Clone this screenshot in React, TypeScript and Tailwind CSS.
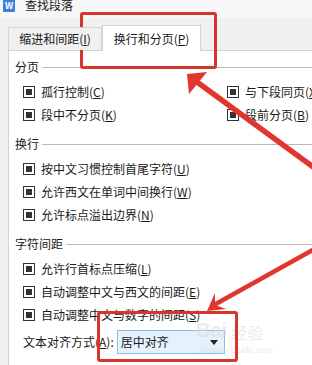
import React from 'react';

const font = { fontFamily: '"Noto Sans CJK SC", "Noto Sans", sans-serif' };

function Check() {
  return (
    <span className="flex items-center justify-center w-[12px] h-[12px] border border-[#333333] bg-white shrink-0">
      <span className="w-[6px] h-[6px] bg-[#333333]" />
    </span>
  );
}

function Item({ label, k }: { label: string; k: string }) {
  return (
    <div className="flex items-center gap-[6px] h-[23px] whitespace-nowrap">
      <Check />
      <span>
        {label}(<u>{k}</u>)
      </span>
    </div>
  );
}

function Section({ title, first }: { title: string; first?: boolean }) {
  return (
    <div className={`flex items-center gap-[3px] h-[16px] ${first ? '' : 'mt-[10px]'}`}>
      <span className="leading-[16px]">{title}</span>
      <span className="flex-1 h-px bg-[#b9b9b9]" />
    </div>
  );
}

export default function App() {
  return (
    <div
      className="relative w-[312px] h-[365px] overflow-hidden bg-[#f0f0f0] text-[12px] text-[#1a1a1a]"
      style={font}
    >
      {/* Title bar */}
      <div className="h-[18px] bg-[#f7f7f7] flex items-start gap-[10px] pl-[3px]">
        <span className="flex items-center justify-center w-[12px] h-[13px] -mt-[1px] bg-[#3d7fe0] text-white text-[9px] leading-none font-bold rounded-[1px]">
          W
        </span>
        <span className="text-[12px] leading-[13px] -mt-[2px] text-[#222]">查找段落</span>
      </div>

      {/* Tabs */}
      <div className="h-[32px] flex items-end pl-[8px] relative z-10">
        <div className="w-[94px] h-[23px] border border-b-0 border-[#d4d4d4] bg-[#f0f0f0] flex items-center justify-center">
          缩进和间距(<u>I</u>)
        </div>
        <div className="w-[99px] h-[26px] -mb-px border border-b-0 border-[#d4d4d4] bg-white flex items-center justify-center">
          换行和分页(<u>P</u>)
        </div>
      </div>

      {/* Panel */}
      <div className="ml-[8px] h-full bg-white border-l border-t border-[#d4d4d4] pt-[8px] pl-[6px]">
        <Section title="分页" first />
        <div className="mt-[5px] pl-[8px] grid grid-cols-[204px_1fr]">
          <Item label="孤行控制" k="C" />
          <Item label="与下段同页" k="X" />
          <Item label="段中不分页" k="K" />
          <Item label="段前分页" k="B" />
        </div>

        <Section title="换行" />
        <div className="mt-[5px] pl-[8px]">
          <Item label="按中文习惯控制首尾字符" k="U" />
          <Item label="允许西文在单词中间换行" k="W" />
          <Item label="允许标点溢出边界" k="N" />
        </div>

        <Section title="字符间距" />
        <div className="mt-[5px] pl-[8px]">
          <Item label="允许行首标点压缩" k="L" />
          <Item label="自动调整中文与西文的间距" k="E" />
          <Item label="自动调整中文与数字的间距" k="S" />
        </div>

        <div className="mt-[4px] pl-[8px] flex items-center gap-[3px] h-[24px]">
          <span className="whitespace-nowrap">
            文本对齐方式(<u>A</u>):
          </span>
          <div className="w-[108px] h-[24px] border border-[#8dbbe8] bg-[#e5f1fb] flex items-center justify-between pl-[3px] pr-[6px]">
            <span>居中对齐</span>
            <svg width="8" height="5" viewBox="0 0 8 5">
              <path d="M0 0 L8 0 L4 5 Z" fill="#222" />
            </svg>
          </div>
        </div>
      </div>

      {/* Watermark */}
      <div className="absolute left-[196px] top-[320px] text-[#d8d8d8] opacity-50 pointer-events-none leading-none">
        <div className="flex items-end gap-[4px]">
          <span className="text-[20px] font-bold" style={{ fontFamily: '"Liberation Sans", sans-serif' }}>
            Bai
          </span>
          <span className="text-[16px]">经验</span>
        </div>
        <div className="text-[9px] mt-[6px] ml-[4px]" style={{ fontFamily: '"Liberation Sans", sans-serif' }}>
          jingyan.baidu.com
        </div>
      </div>

      {/* Red annotation boxes */}
      <div className="absolute left-[80px] top-[12px] w-[137px] h-[57px] border-[3px] border-[#d8332c] rounded-[3px]" />
      <div className="absolute left-[97px] top-[311px] w-[141px] h-[51px] border-[3px] border-[#d8332c] rounded-[3px]" />

      {/* Red arrows */}
      <svg className="absolute inset-0 pointer-events-none" width="312" height="365" viewBox="0 0 312 365">
        <line x1="320" y1="172" x2="197" y2="82" stroke="#e0362e" strokeWidth="5.5" />
        <polygon points="187,74 207,72 198,83 189,94" fill="#e0362e" />
        <line x1="318" y1="247" x2="214" y2="305" stroke="#e0362e" strokeWidth="4.5" />
        <polygon points="207,311 215,293 215,305 226,309" fill="#e0362e" />
      </svg>
    </div>
  );
}
